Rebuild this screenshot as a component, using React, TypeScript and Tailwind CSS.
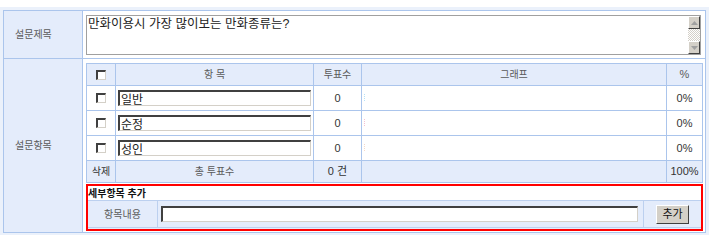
import { Fragment } from "react";

const items = [
  { name: "일반", bar: "bg-[repeating-linear-gradient(#b6e2f7_0_1px,transparent_1px_2px)]" },
  { name: "순정", bar: "bg-[repeating-linear-gradient(#f5c2d2_0_1px,transparent_1px_2px)]" },
  { name: "성인", bar: "bg-[repeating-linear-gradient(#f3d9c9_0_1px,transparent_1px_2px)]" }
];

function CheckBox() {
  return (
    <span className="block h-[10px] w-[10px] border-t-2 border-l-2 border-r border-b border-t-[#404040] border-l-[#404040] border-r-[#d4d0c8] border-b-[#d4d0c8] bg-white" />
  );
}

function ScrollButton({ up }: { up?: boolean }) {
  return (
    <div className="flex h-[13px] items-center justify-center border border-t-white border-l-white border-r-[#404040] border-b-[#404040] bg-[#d4d0c8]">
      <svg width="7" height="4" viewBox="0 0 7 4">
        {up ? <path d="M0 4 L3.5 0 L7 4 Z" fill="#a0a0a0" /> : <path d="M0 0 L3.5 4 L7 0 Z" fill="#a0a0a0" />}
      </svg>
    </div>
  );
}

export default function App() {
  const cell = "flex items-center justify-center";
  return (
    <div className="pt-[7px] font-['Liberation_Sans','Noto_Sans_CJK_KR',sans-serif] text-[#5a5a5a]">
      <div className="bg-[#ebf1fb] pt-[3px] pb-[2px] pl-[3px] pr-[3px]">
        <div className="grid grid-cols-[78px_1fr] gap-px bg-[#abc5ec] p-px">
          <div className="flex h-[47px] items-center bg-[#e4ecfb] pl-[11px] text-[10px]">설문제목</div>
          <div className="bg-white pl-[3px] pr-[4px] pt-[4px]">
            <div className="flex h-[40px] border border-[#a0a0a0] bg-white">
              <div className="flex-1 pl-[1px] pt-[1px] text-[12.5px] leading-[14px] text-[#222]">
                만화이용시 가장 많이보는 만화종류는?
              </div>
              <div className="flex w-[12px] flex-col">
                <ScrollButton up />
                <div className="flex-1 bg-[repeating-conic-gradient(#d4d0c8_0_25%,#ffffff_0_50%)] bg-[length:2px_2px]" />
                <ScrollButton />
              </div>
            </div>
          </div>

          <div className="flex items-center bg-[#e4ecfb] pl-[11px] text-[10px]">설문항목</div>
          <div className="bg-white pt-[4px] pb-[1px] pl-[3px] pr-[2px]">
            <div className="grid grid-cols-[28px_197px_47px_304px_35px] grid-rows-[21px_24px_24px_24px_21px] gap-px bg-[#abc5ec] p-px text-[10px]">
              <div className={`${cell} bg-[#e4ecfb]`}>
                <CheckBox />
              </div>
              <div className={`${cell} bg-[#e4ecfb]`}>항 목</div>
              <div className={`${cell} bg-[#e4ecfb]`}>투표수</div>
              <div className={`${cell} bg-[#e4ecfb]`}>그래프</div>
              <div className={`${cell} bg-[#e4ecfb] text-[11px]`}>%</div>

              {items.map((it) => (
                <Fragment key={it.name}>
                  <div className={`${cell} bg-white`}>
                    <CheckBox />
                  </div>
                  <div className="flex items-center bg-white pl-[2px]">
                    <input
                      readOnly
                      value={it.name}
                      className="h-[16px] w-[193px] border-t-2 border-l-2 border-r border-b border-t-[#404040] border-l-[#404040] border-r-[#d4d0c8] border-b-[#d4d0c8] bg-white pl-px text-[12px] leading-[12px] text-[#222] outline-none"
                    />
                  </div>
                  <div className={`${cell} bg-white text-[11px] text-[#333]`}>0</div>
                  <div className="flex items-center bg-white pl-[2px]">
                    <span className={`block h-[8px] w-px ${it.bar}`} />
                  </div>
                  <div className={`${cell} bg-white text-[11px] text-[#333]`}>0%</div>
                </Fragment>
              ))}

              <div className={`${cell} bg-[#e4ecfb] text-[#333]`}>삭제</div>
              <div className={`${cell} bg-[#e4ecfb]`}>총 투표수</div>
              <div className={`${cell} bg-[#e4ecfb] text-[11px] text-[#333]`}>0 건</div>
              <div className="bg-[#e4ecfb]" />
              <div className={`${cell} bg-[#e4ecfb] text-[11px] text-[#333]`}>100%</div>
            </div>

            <div className="mt-px border-2 border-[#ff0000]">
              <div className="flex h-[14px] items-center bg-white text-[10px] font-bold text-[#111]">세부항목 추가</div>
              <div className="grid grid-cols-[69px_485px_1fr] gap-px border-y border-[#bcd0ef] bg-[#bcd0ef]">
                <div className={`${cell} h-[26px] bg-[#e4ecfb] text-[10px]`}>항목내용</div>
                <div className="flex items-center bg-[#e4ecfb] pl-[3px]">
                  <input
                    readOnly
                    className="h-[16px] w-[477px] border-t-2 border-l-2 border-r border-b border-t-[#404040] border-l-[#404040] border-r-[#d4d0c8] border-b-[#d4d0c8] bg-white outline-none"
                  />
                </div>
                <div className={`${cell} bg-[#e4ecfb]`}>
                  <button
                    type="button"
                    className="h-[19px] w-[33px] border border-t-white border-l-white border-r-[#404040] border-b-[#404040] bg-[#d4d0c8] text-[11px] leading-[15px] text-[#111]"
                  >
                    추가
                  </button>
                </div>
              </div>
              <div className="h-px bg-[#e4ecfb]" />
            </div>
          </div>
        </div>
      </div>
    </div>
  );
}
